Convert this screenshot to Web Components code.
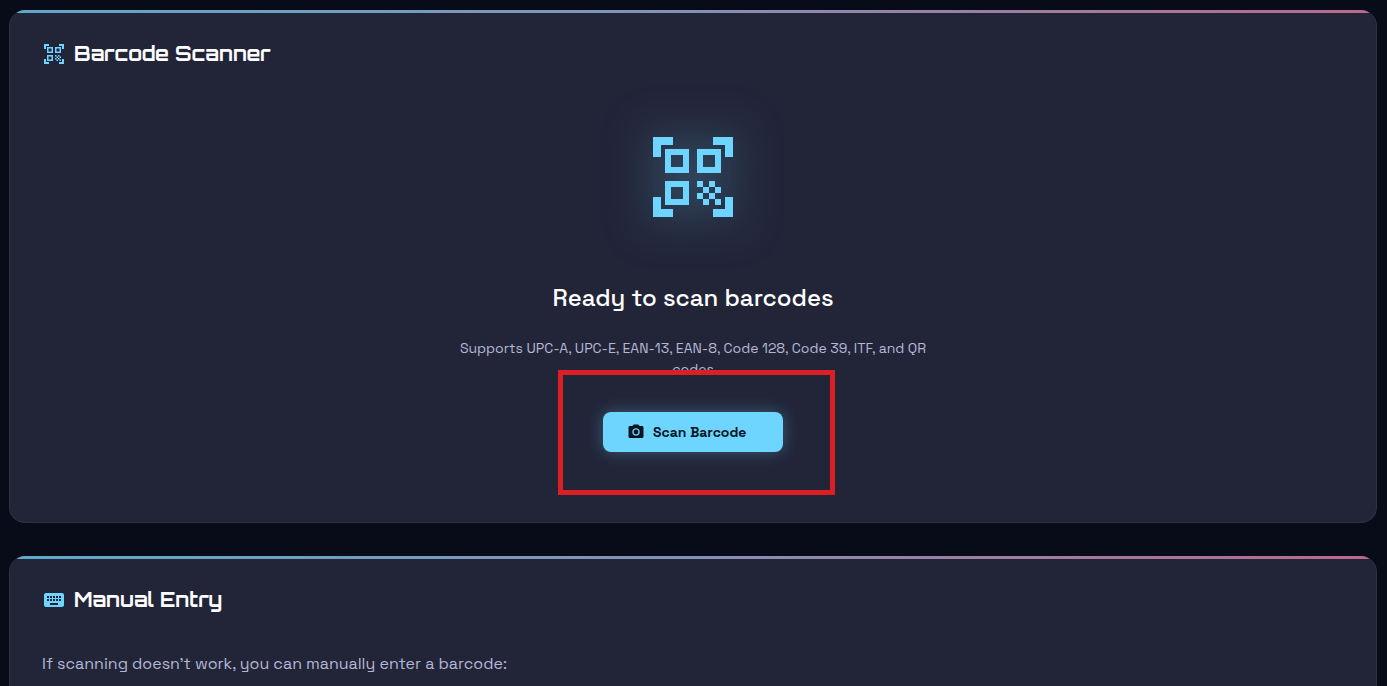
<!DOCTYPE html>
<html lang="en">
<head>
<meta charset="utf-8">
<meta name="viewport" content="width=device-width, initial-scale=1">
<title>Barcode Scanner</title>
<style>
  :root {
    --accent: #6dd5ff;
    --text: #ffffff;
    --muted: #b4b7d6;
    --panel: #222538;
    --title-font: "Orbitron", "DejaVu Sans", sans-serif;
    --body-font: "Space Grotesk", Inter, sans-serif;
  }
  html { background: #080c18; }
  body {
    margin: 0;
    padding: 10px 10px 0 9px;
    height: 100vh;
    box-sizing: border-box;
    overflow: hidden;
    font-family: var(--body-font);
    color: var(--text);
  }
</style>
</head>
<body>
<scanner-page></scanner-page>
<script>
const ICONS = {
  qr: '<path d="M9.5 6.5v3h-3v-3h3M11 5H5v6h6V5zm-1.5 9.5v3h-3v-3h3M11 13H5v6h6v-6zm6.5-6.5v3h-3v-3h3M19 5h-6v6h6V5zm-6 8h1.5v1.5H13V13zm1.5 1.5H16V16h-1.5v-1.5zM16 13h1.5v1.5H16V13zm-3 3h1.5v1.5H13V16zm1.5 1.5H16V19h-1.5v-1.5zM16 16h1.5v1.5H16V16zm1.5-1.5H19V16h-1.5v-1.5zm0 3H19V19h-1.5v-1.5zM22 7h-2V4h-3V2h5v5zm0 15v-5h-2v3h-3v2h5zM2 22h5v-2H4v-3H2v5zM2 2v5h2V4h3V2H2z"/>',
  keyboard: '<path d="M20 5H4c-1.1 0-1.99.9-1.99 2L2 17c0 1.100.9 2 2 2h16c1.100 0 2-.9 2-2V7c0-1.100-.9-2-2-2zm-9 3h2v2h-2V8zm0 3h2v2h-2v-2zM8 8h2v2H8V8zm0 3h2v2H8v-2zm-1 2H5v-2h2v2zm0-3H5V8h2v2zm9 7H8v-2h8v2zm0-4h-2v-2h2v2zm0-3h-2V8h2v2zm3 3h-2v-2h2v2zm0-3h-2V8h2v2z"/>',
  camera: '<circle cx="12" cy="12" r="3.200"/><path d="M9 2 7.170 4H4c-1.100 0-2 .9-2 2v12c0 1.100.9 2 2 2h16c1.100 0 2-.9 2-2V6c0-1.100-.9-2-2-2h-3.170L15 2H9zm3 15c-2.760 0-5-2.240-5-5s2.240-5 5-5 5 2.240 5 5-2.240 5-5 5z"/>'
};

class UiIcon extends HTMLElement {
  connectedCallback() {
    if (this.shadowRoot) return;
    this.attachShadow({ mode: 'open' }).innerHTML = `
      <style>
        :host { display: block; flex: none; width: var(--icon-size, 24px); height: var(--icon-size, 24px); }
        svg { display: block; width: 100%; height: 100%; fill: currentColor; overflow: visible; }
      </style>
      <svg viewBox="0 0 24 24" aria-hidden="true">${ICONS[this.getAttribute('name')]}</svg>`;
  }
}
customElements.define('ui-icon', UiIcon);

class PanelCard extends HTMLElement {
  connectedCallback() {
    if (this.shadowRoot) return;
    this.attachShadow({ mode: 'open' }).innerHTML = `
      <style>
        :host { display: block; }
        section {
          position: relative;
          overflow: hidden;
          padding: 32px;
          border: 1px solid #2e3245;
          border-top: 0;
          border-radius: 16px;
          background: var(--panel);
        }
        section::before {
          content: "";
          position: absolute;
          inset: 0 0 auto;
          height: 3px;
          background: linear-gradient(90deg, #5fa9cb, #8590b5 50%, #b9698c);
        }
        header { display: flex; align-items: center; gap: 8px; height: 24px; color: var(--accent); }
        h2 { margin: 0; font: 700 20px/24px var(--title-font); color: var(--text); }
      </style>
      <section>
        <header><ui-icon name="${this.getAttribute('icon')}"></ui-icon><h2><slot name="title"></slot></h2></header>
        <slot></slot>
      </section>`;
  }
}
customElements.define('panel-card', PanelCard);

class ActionButton extends HTMLElement {
  connectedCallback() {
    if (this.shadowRoot) return;
    this.attachShadow({ mode: 'open' }).innerHTML = `
      <style>
        :host { display: block; }
        button {
          display: flex;
          align-items: center;
          gap: 8px;
          min-width: 180px;
          height: 40px;
          padding: 0 24px;
          border: 0;
          border-radius: 8px;
          background: var(--accent);
          color: #071522;
          font: 600 14px/20px var(--body-font);
          white-space: nowrap;
          box-shadow: 0 0 16px rgba(109, 213, 255, .32);
          cursor: pointer;
        }
        ui-icon { --icon-size: 18px; }
      </style>
      <button type="button"><ui-icon name="${this.getAttribute('icon')}"></ui-icon><span><slot></slot></span></button>`;
  }
}
customElements.define('action-button', ActionButton);

class HighlightFrame extends HTMLElement {
  connectedCallback() {
    if (this.shadowRoot) return;
    this.attachShadow({ mode: 'open' }).innerHTML = `
      <style>
        :host { display: block; position: relative; }
        .frame {
          position: absolute;
          inset: -42px -52px -43px -45px;
          border: 5px solid #dc1f24;
          pointer-events: none;
        }
      </style>
      <slot></slot><div class="frame"></div>`;
  }
}
customElements.define('highlight-frame', HighlightFrame);

class ScanPrompt extends HTMLElement {
  connectedCallback() {
    if (this.shadowRoot) return;
    this.attachShadow({ mode: 'open' }).innerHTML = `
      <style>
        :host { display: flex; flex-direction: column; align-items: center; padding: 63px 0 38px; text-align: center; }
        .hero {
          --icon-size: 96px;
          color: var(--accent);
          filter: drop-shadow(0 0 24px rgba(109, 213, 255, .5));
        }
        h3 { margin: 57px 0 0; font: 500 24px/32px var(--body-font); }
        p { max-width: 480px; margin: 24px 0 32px; font: 400 14px/21px var(--body-font); color: var(--muted); }
      </style>
      <ui-icon class="hero" name="qr"></ui-icon>
      <h3>Ready to scan barcodes</h3>
      <p>Supports UPC-A, UPC-E, EAN-13, EAN-8, Code 128, Code 39, ITF, and QR codes</p>
      <highlight-frame><action-button icon="camera">Scan Barcode</action-button></highlight-frame>`;
  }
}
customElements.define('scan-prompt', ScanPrompt);

class ScannerPage extends HTMLElement {
  connectedCallback() {
    if (this.shadowRoot) return;
    this.attachShadow({ mode: 'open' }).innerHTML = `
      <style>
        :host { display: grid; gap: 33px; }
        p { margin: 40px 0 96px; font: 400 16px/24px var(--body-font); color: var(--muted); }
      </style>
      <panel-card icon="qr"><span slot="title">Barcode Scanner</span><scan-prompt></scan-prompt></panel-card>
      <panel-card icon="keyboard"><span slot="title">Manual Entry</span><p>If scanning doesn't work, you can manually enter a barcode:</p></panel-card>`;
  }
}
customElements.define('scanner-page', ScannerPage);
</script>
</body>
</html>
